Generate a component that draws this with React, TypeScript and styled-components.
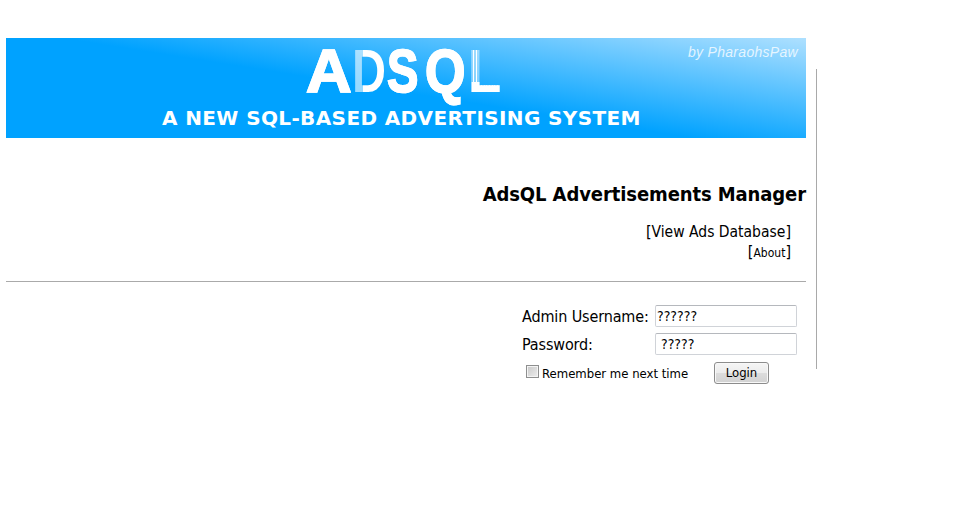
import React from "react";
import styled, { createGlobalStyle } from "styled-components";

const Global = createGlobalStyle`
  html, body { margin: 0; padding: 0; background: #fff; }
  body { font-family: "DejaVu Sans Condensed", "DejaVu Sans", sans-serif; font-stretch: condensed; color: #000; }
`;

const Page = styled.div`
  position: relative;
  box-sizing: border-box;
  width: 812px;
  height: 521px;
  padding: 38px 6px 0 6px;
`;

const SideRule = styled.div`
  position: absolute;
  left: 816px;
  top: 69px;
  width: 1px;
  height: 300px;
  background: #a9a9a9;
`;

const Banner = styled.header`
  width: 800px;
  height: 100px;
  box-sizing: border-box;
  background: linear-gradient(9deg, #00a2ff 0%, #00a2ff 48%, #aee0ff 100%);
  display: flex;
  flex-direction: column;
  justify-content: space-between;
  padding: 9px 0 7px;
  position: relative;
`;

const Credit = styled.span`
  position: absolute;
  right: 8px;
  top: 6px;
  font: italic 14px "Liberation Sans", sans-serif;
  letter-spacing: 0.3px;
  color: rgba(255, 255, 255, 0.78);
`;

const Logo = styled.div`
  display: flex;
  align-items: center;
  padding-left: 300px;
  height: 48px;
  font: 700 62px/70px "Liberation Sans", sans-serif;
  white-space: nowrap;
`;

const LogoLetter = styled.span<{ $paint?: string; $adv: number; $slot: number; $sx: number }>`
  display: inline-block;
  flex: none;
  width: ${(p) => p.$adv}px;
  margin: -11px ${(p) => p.$slot - p.$adv}px -11px 0;
  color: transparent;
  -webkit-text-stroke: ${(p) => (p.$paint ? "0" : "1.6px #fff")};
  background-image: ${(p) => p.$paint ?? "linear-gradient(#fff, #fff)"};
  -webkit-background-clip: text;
  background-clip: text;
  transform-origin: left center;
  transform: scaleX(${(p) => p.$sx});
`;

const Tagline = styled.div`
  padding-left: 156px;
  font: 700 20px/26px "DejaVu Sans", sans-serif;
  font-stretch: normal;
  color: #fff;
  text-transform: uppercase;
  letter-spacing: 0.38px;
  white-space: nowrap;
`;

const Title = styled.h1`
  margin: 43px 0 0;
  font-size: 20px;
  line-height: 27px;
  font-weight: 700;
  letter-spacing: -0.1px;
  text-align: right;
`;

const NavLine = styled.div<{ $small?: boolean }>`
  text-align: right;
  padding-right: 15px;
  font-size: 16px;
  line-height: ${(p) => (p.$small ? "20px" : "21px")};
  margin-top: ${(p) => (p.$small ? "-1px" : "13px")};
`;

const NavLink = styled.a<{ $small?: boolean }>`
  color: #000;
  text-decoration: none;
  font-size: ${(p) => (p.$small ? "12px" : "15.5px")};
`;

const Divider = styled.hr`
  margin: 18px 0 0;
  border: 0;
  height: 1px;
  background: #aaa;
`;

const Form = styled.form`
  margin: 23px 0 0 516px;
  display: grid;
  grid-template-columns: 133px 142px;
  grid-auto-rows: 22px;
  row-gap: 6px;
  align-items: center;
`;

const Label = styled.label`
  font-size: 16px;
  line-height: 22px;
  letter-spacing: -0.13px;
  padding-top: 1px;
`;

const Field = styled.input<{ $inset?: boolean }>`
  box-sizing: border-box;
  width: 142px;
  height: 22px;
  margin: 0;
  padding: 0 2px 0 ${(p) => (p.$inset ? "5px" : "1px")};
  border: 1px solid #d0d3d8;
  border-top-color: #b5b8bd;
  border-radius: 2px;
  background: #fff;
  font: 14px "DejaVu Sans Condensed", "DejaVu Sans", sans-serif;
  font-stretch: condensed;
  color: #000;
  outline: none;
`;

const OptionsRow = styled.div`
  grid-column: 1 / -1;
  display: flex;
  align-items: center;
  height: 22px;
  margin-top: 1px;
`;

const Remember = styled.label`
  display: flex;
  align-items: center;
  margin-left: 4px;
  padding-top: 2px;
  width: 188px;
  font-size: 13px;
  line-height: 16px;
`;

const Check = styled.input`
  appearance: none;
  box-sizing: border-box;
  width: 13px;
  height: 13px;
  margin: -5px 3px 0 0;
  border: 1px solid #8e8f8f;
  background: linear-gradient(135deg, #c8c8c8, #eeeeee);
  box-shadow: inset 0 0 0 1px #f4f4f4;
`;

const LoginButton = styled.button`
  box-sizing: border-box;
  width: 55px;
  height: 22px;
  padding: 0;
  border: 1px solid #8c8c8c;
  border-radius: 3px;
  background: linear-gradient(#f5f5f5 0%, #ececec 48%, #dcdcdc 52%, #d2d2d2 100%);
  box-shadow: inset 0 0 0 1px #f8f8f8;
  font: 13px "DejaVu Sans Condensed", "DejaVu Sans", sans-serif;
  font-stretch: condensed;
  color: #000;
`;

const bars = `repeating-linear-gradient(90deg, #fff 0 1px, rgba(255,255,255,.45) 1px 3px)`;
const dPaint = `linear-gradient(90deg, rgba(255,255,255,.6) 0 32%, #fff 32% 100%)`;
const lPaint = `linear-gradient(transparent 0 66%, #fff 66% 100%), ${bars}`;

export default function App() {
  return (
    <Page>
      <Global />
      <Banner>
        <Credit>by PharaohsPaw</Credit>
        <Logo>
          <LogoLetter $adv={46} $slot={46} $sx={1.02}>A</LogoLetter>
          <LogoLetter $adv={45} $slot={35} $sx={0.76} $paint={dPaint}>D</LogoLetter>
          <LogoLetter $adv={42} $slot={37.5} $sx={0.76}>S</LogoLetter>
          <LogoLetter $adv={49} $slot={43} $sx={0.84}>Q</LogoLetter>
          <LogoLetter $adv={40} $slot={30} $sx={0.88} $paint={lPaint}>L</LogoLetter>
        </Logo>
        <Tagline>a new sql-based advertising system</Tagline>
      </Banner>
      <SideRule />
      <Title>AdsQL Advertisements Manager</Title>
      <NavLine>
        [<NavLink href="#">View Ads Database</NavLink>]
      </NavLine>
      <NavLine $small>
        [<NavLink $small href="#">About</NavLink>]
      </NavLine>
      <Divider />
      <Form>
        <Label htmlFor="user">Admin Username:</Label>
        <Field id="user" type="text" defaultValue="??????" />
        <Label htmlFor="pass">Password:</Label>
        <Field id="pass" type="text" $inset defaultValue="?????" />
        <OptionsRow>
          <Remember>
            <Check type="checkbox" />
            Remember me next time
          </Remember>
          <LoginButton type="button">Login</LoginButton>
        </OptionsRow>
      </Form>
    </Page>
  );
}
